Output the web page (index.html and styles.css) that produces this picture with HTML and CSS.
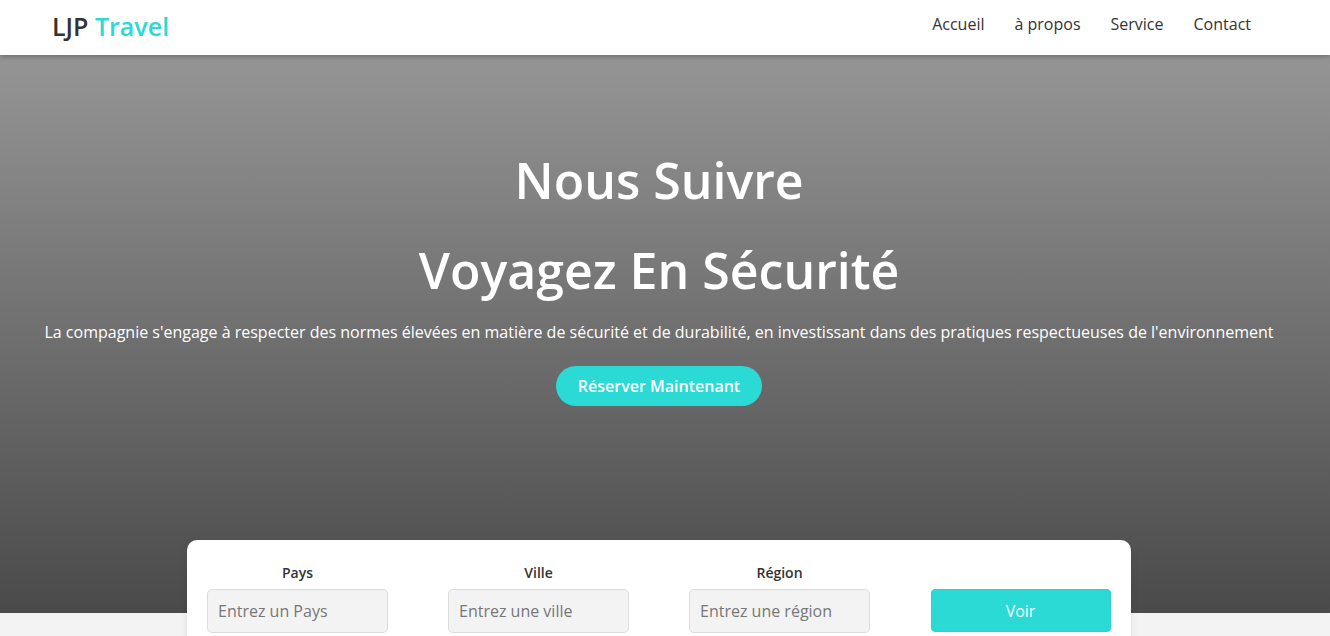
FILE: index.html
```html
<!DOCTYPE html>
<html lang="fr">
<head>
<meta charset="utf-8">
<title>LJP Travel</title>
<link rel="stylesheet" href="styles.css">
</head>
<body>
<header class="header">
  <a class="logo" href="#">LJP <span class="logo-accent">Travel</span></a>
  <nav class="nav">
    <a href="#">Accueil</a>
    <a href="#">à propos</a>
    <a href="#">Service</a>
    <a href="#">Contact</a>
  </nav>
</header>
<section class="hero">
  <h1 class="hero-title">Nous Suivre</h1>
  <h1 class="hero-title second">Voyagez En Sécurité</h1>
  <p class="hero-text">La compagnie s'engage à respecter des normes élevées en matière de sécurité et de durabilité, en investissant dans des pratiques respectueuses de l'environnement</p>
  <a class="btn-hero" href="#">Réserver Maintenant</a>
</section>
<section class="search-wrap">
  <form class="search">
    <div class="field">
      <label>Pays</label>
      <input type="text" placeholder="Entrez un Pays">
    </div>
    <div class="field">
      <label>Ville</label>
      <input type="text" placeholder="Entrez une ville">
    </div>
    <div class="field">
      <label>Région</label>
      <input type="text" placeholder="Entrez une région">
    </div>
    <div class="field">
      <label class="empty">&nbsp;</label>
      <button type="button" class="btn-voir">Voir</button>
    </div>
  </form>
</section>
</body>
</html>
```
FILE: styles.css
```css
* { box-sizing: border-box; }
html, body { margin: 0; padding: 0; }
body {
  font-family: "Open Sans", "Noto Sans", sans-serif;
  background: #f3f3f3;
  color: #333;
  overflow: hidden;
}
a { text-decoration: none; }
.header {
  position: relative;
  z-index: 2;
  height: 55px;
  background: #fff;
  display: flex;
  align-items: center;
  justify-content: space-between;
  padding: 0 79px 0 52px;
  box-shadow: 0 2px 5px rgba(0,0,0,0.25);
}
.logo {
  font-size: 25px;
  font-weight: 600;
  color: #333;
  margin-top: -3px;
}
.logo-accent { color: #2bd9d5; }
.nav { display: flex; gap: 30px; margin-top: -7px; padding-left: 1px; }
.nav a {
  font-size: 16px;
  color: #333;
}
.hero {
  height: 558px;
  background: linear-gradient(to bottom, #959595 0%, #4a4a4a 100%);
  display: flex;
  flex-direction: column;
  align-items: center;
  padding: 93px 12px 0 0;
  color: #fff;
  text-align: center;
}
.hero-title {
  margin: 0;
  font-size: 50px;
  font-weight: 600;
  line-height: 64px;
}
.hero-title.second { margin-top: 26px; }
.hero-text {
  margin: 18px 0 0;
  font-size: 16px;
  line-height: 24px;
}
.btn-hero {
  margin-top: 22px;
  display: inline-flex;
  align-items: center;
  justify-content: center;
  width: 206px;
  height: 40px;
  border-radius: 20px;
  background: #2bd9d5;
  color: #fff;
  font-size: 16px;
  font-weight: 600;
}
.search-wrap {
  display: flex;
  justify-content: center;
  margin-top: -73px;
  padding-right: 12px;
}
.search {
  width: 944px;
  background: #fff;
  border-radius: 10px;
  padding: 23px 20px 20px;
  display: flex;
  gap: 60px;
  box-shadow: 0 2px 8px rgba(0,0,0,0.08);
}
.field {
  width: 181px;
  display: flex;
  flex-direction: column;
  align-items: center;
}
.field label {
  font-size: 14px;
  font-weight: 600;
  color: #333;
  line-height: 20px;
  margin-bottom: 6px;
}
.field input {
  width: 181px;
  height: 44px;
  background: #f3f3f3;
  border: 1px solid #dcdcdc;
  border-radius: 5px;
  padding: 0 10px;
  font-family: inherit;
  font-size: 16px;
  color: #333;
}
.field input::placeholder { color: #777; }
.btn-voir {
  width: 180px;
  height: 43px;
  background: #2bd9d5;
  border: 1px solid #2bd3cf;
  border-radius: 4px;
  color: #fff;
  font-family: inherit;
  font-size: 16px;
}
```
